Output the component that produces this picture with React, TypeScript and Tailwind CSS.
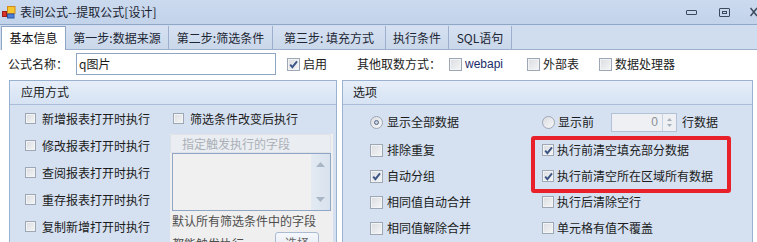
import React from 'react';

const Check = ({ checked = false, size = 13 }: { checked?: boolean; size?: number }) => (
  <span
    className="relative inline-flex shrink-0 items-center justify-center border border-[#9ea7b4] bg-gradient-to-br from-[#d9dce1] to-[#f6f6f6] shadow-[inset_0_0_0_1px_#f2f3f5]"
    style={{ width: size, height: size }}
  >
    {checked && (
      <svg width="11" height="11" viewBox="0 0 11 11" className="absolute">
        <path d="M2.2 5.6 L4.4 8.2 L9 2.4" fill="none" stroke="#3b5486" strokeWidth="1.9" />
      </svg>
    )}
  </span>
);

const Radio = ({ checked = false }: { checked?: boolean }) => (
  <span className="relative inline-flex h-[13px] w-[13px] shrink-0 items-center justify-center rounded-full border border-[#9ea7b4] bg-gradient-to-br from-[#d9dce1] to-[#f8f8f8]">
    {checked && <span className="h-[5px] w-[5px] rounded-full border border-[#56698a] bg-[#c8d0dc]" />}
  </span>
);

const Item = ({ label, checked, size, gap = 'gap-[4px]' }: { label: string; checked?: boolean; size?: number; gap?: string }) => (
  <div className={`flex items-center ${gap}`}>
    <Check checked={checked} size={size} />
    <span className="whitespace-nowrap">{label}</span>
  </div>
);

const tabs = [
  { label: '第一步:数据来源', w: 'w-[103px]' },
  { label: '第二步:筛选条件', w: 'w-[104px]' },
  { label: '第三步: 填充方式', w: 'w-[113px]' },
  { label: '执行条件', w: 'w-[63px]' },
  { label: 'SQL语句', w: 'w-[63px]' },
];

const leftRows = ['新增报表打开时执行', '修改报表打开时执行', '查阅报表打开时执行', '重存报表打开时执行', '复制新增打开时执行'];

export default function App() {
  return (
    <div className="h-[242px] w-[757px] overflow-hidden bg-white text-[12px] leading-none text-[#1b1b1b] font-['Noto_Sans_CJK_SC','Noto_Sans',sans-serif]">
      {/* title bar */}
      <div className="flex h-[25px] items-center border-b border-[#8ea6c7] bg-gradient-to-b from-[#cbdaee] to-[#c2d3ea] pl-[2px]">
        <svg width="14" height="14" viewBox="0 0 14 14">
          <rect x="5.5" y="1.5" width="7.5" height="7" fill="#f7c52e" stroke="#d08a1c" />
          <rect x="5.5" y="9" width="6.5" height="4" fill="#4f7fd6" stroke="#2b56a8" />
          <rect x="0.5" y="6.5" width="4" height="5" fill="#d9322a" stroke="#9c1c17" />
        </svg>
        <span className="ml-[4px] text-[#1a2230]">表间公式--提取公式[设计]</span>
        <div className="ml-auto flex items-center">
          <span className="mr-[22px] h-[5px] w-[11px] rounded-[1px] border border-[#3d4a5e]" />
          <span className="mr-[20px] flex h-[9px] w-[11px] items-center justify-center rounded-[1px] border border-[#3d4a5e]">
            <span className="h-[3px] w-[5px] border border-[#3d4a5e]" />
          </span>
          <svg width="7" height="10" viewBox="0 0 7 10">
            <path d="M0.5 1 L7 9 M7 1 L0.5 9" stroke="#3d4a5e" strokeWidth="1.5" />
          </svg>
        </div>
      </div>

      {/* tab strip */}
      <div className="flex h-[25px] items-end bg-[#d0ddef] pl-[1px]">
        <div className="flex h-[24px] w-[65px] items-center justify-center border-x border-t border-[#8fa5c5] bg-white pb-[1px] text-[#111]">
          基本信息
        </div>
        <div className="flex items-end border-b border-[#9cb0cd]">
          {tabs.map((t) => (
            <div
              key={t.label}
              className={`flex h-[23px] ${t.w} items-center justify-center whitespace-nowrap border-r border-[#9cb0cd] bg-gradient-to-b from-[#d6e2f2] to-[#c9d7ea] text-[#1d2633]`}
            >
              {t.label}
            </div>
          ))}
        </div>
        <div className="h-px flex-1 bg-[#9cb0cd]" />
      </div>

      {/* name row */}
      <div className="flex h-[30px] items-center pl-[8px] pb-[2px]">
        <span className="w-[68px]">公式名称：</span>
        <div className="flex h-[22px] w-[200px] items-center border border-[#8ea5c6] pl-[2px]">q图片</div>
        <div className="ml-[11px] w-[70px]">
          <Item label="启用" checked gap="gap-[3px]" />
        </div>
        <span className="w-[92px]">其他取数方式：</span>
        <div className="w-[78px]">
          <div className="flex items-center gap-[3px]">
            <Check />
            <span className="font-['Liberation_Sans',sans-serif] text-[#1c2c6a]">webapi</span>
          </div>
        </div>
        <div className="w-[72px]">
          <Item label="外部表" gap="gap-[3px]" />
        </div>
        <Item label="数据处理器" gap="gap-[3px]" />
      </div>

      {/* groups */}
      <div className="flex gap-[5px] pl-[9px]">
        {/* 应用方式 */}
        <div className="w-[328px] shrink-0 border border-[#9ab1d2] bg-[#d5e1f1]">
          <div className="flex h-[24px] items-center border-b border-[#a9bdd8] bg-gradient-to-b from-[#e6eef9] to-[#d6e3f3] pl-[11px] pb-[2px]">
            应用方式
          </div>
          <div className="flex">
            <div className="w-[160px] pl-[15px]">
              {leftRows.map((r) => (
                <div key={r} className="flex h-[27px] items-center">
                  <Item label={r} size={11} gap="gap-[6px]" />
                </div>
              ))}
            </div>
            <div className="w-[165px]">
              <div className="flex h-[27px] items-center pl-[3px]">
                <Item label="筛选条件改变后执行" size={11} gap="gap-[6px]" />
              </div>
              <div className="mr-[2px] mt-[2px] h-[120px] bg-[#efefef] pl-[2px] pr-[2px]">
                <div className="-ml-[2px] flex h-[19px] items-center rounded-t-[2px] border border-[#dfe3e8] bg-[#eaedf1] pl-[11px] text-[#aab0b8]">
                  指定触发执行的字段
                </div>
                <div className="flex h-[58px] border border-[#8fa6c6] bg-[#f0f0f0]">
                  <div className="flex-1" />
                  <div className="flex w-[19px] flex-col items-center justify-between bg-gradient-to-r from-[#e3eaf2] to-[#d8e2ee] py-[8px]">
                    <svg width="9" height="5" viewBox="0 0 9 5"><path d="M0 5 L4.5 0 L9 5 Z" fill="#a9b6c6" /></svg>
                    <svg width="9" height="5" viewBox="0 0 9 5"><path d="M0 0 L4.5 5 L9 0 Z" fill="#a9b6c6" /></svg>
                  </div>
                </div>
                <div className="text-[#4e4e4e]">
                  <div className="flex h-[20px] items-center">默认所有筛选条件中的字段</div>
                  <div className="relative h-[24px]">
                    <span className="absolute left-0 top-[7px]">都能触发执行</span>
                    <span className="absolute right-[12px] top-[1px] flex h-[22px] w-[44px] items-center justify-center rounded-[3px] border border-[#a9bad2] bg-gradient-to-b from-[#f5f8fc] to-[#e1e8f1] text-[#666]">
                      选择
                    </span>
                  </div>
                </div>
              </div>
            </div>
          </div>
        </div>

        {/* 选项 */}
        <div className="relative w-[411px] shrink-0 border border-[#9ab1d2] bg-[#d5e1f1]">
          <div className="flex h-[24px] items-center border-b border-[#a9bdd8] bg-gradient-to-b from-[#e6eef9] to-[#d6e3f3] pl-[10px] pb-[2px]">
            选项
          </div>
          <div className="pt-[4px]">
            <div className="flex h-[26px] items-center">
              <div className="flex w-[199px] items-center gap-[4px] pl-[27px]">
                <Radio checked />
                <span>显示全部数据</span>
              </div>
              <div className="flex items-center">
                <Radio />
                <span className="ml-[3px]">显示前</span>
                <div className="ml-[17px] flex h-[19px] w-[66px] items-center border border-[#b3c2d6] bg-[#eef0f3]">
                  <span className="flex-1 pr-[4px] text-right font-['Liberation_Sans',sans-serif] text-[#8a8f96]">0</span>
                  <div className="flex h-full w-[14px] flex-col items-center justify-center gap-[3px] border-l border-[#c9d3e0]">
                    <svg width="5" height="3" viewBox="0 0 5 3"><path d="M0 3 L2.5 0 L5 3 Z" fill="#a8b0bb" /></svg>
                    <svg width="5" height="3" viewBox="0 0 5 3"><path d="M0 0 L2.5 3 L5 0 Z" fill="#a8b0bb" /></svg>
                  </div>
                </div>
                <span className="ml-[5px]">行数据</span>
              </div>
            </div>
            <div className="mt-[2px] flex">
              <div className="w-[199px] pl-[27px]">
                {[
                  ['排除重复', false],
                  ['自动分组', true],
                  ['相同值自动合并', false],
                  ['相同值解除合并', false],
                ].map(([l, c]) => (
                  <div key={l as string} className="flex h-[26px] items-center">
                    <Item label={l as string} checked={c as boolean} />
                  </div>
                ))}
              </div>
              <div>
                {[
                  ['执行前清空填充部分数据', true],
                  ['执行前清空所在区域所有数据', true],
                  ['执行后清除空行', false],
                  ['单元格有值不覆盖', false],
                ].map(([l, c]) => (
                  <div key={l as string} className="flex h-[26px] items-center">
                    <Item label={l as string} checked={c as boolean} size={12} gap="gap-[3px]" />
                  </div>
                ))}
              </div>
            </div>
          </div>
          <div className="absolute left-[188px] top-[55px] h-[57px] w-[200px] rounded-[3px] border-[4px] border-[#e8202a]" />
        </div>
      </div>
    </div>
  );
}
